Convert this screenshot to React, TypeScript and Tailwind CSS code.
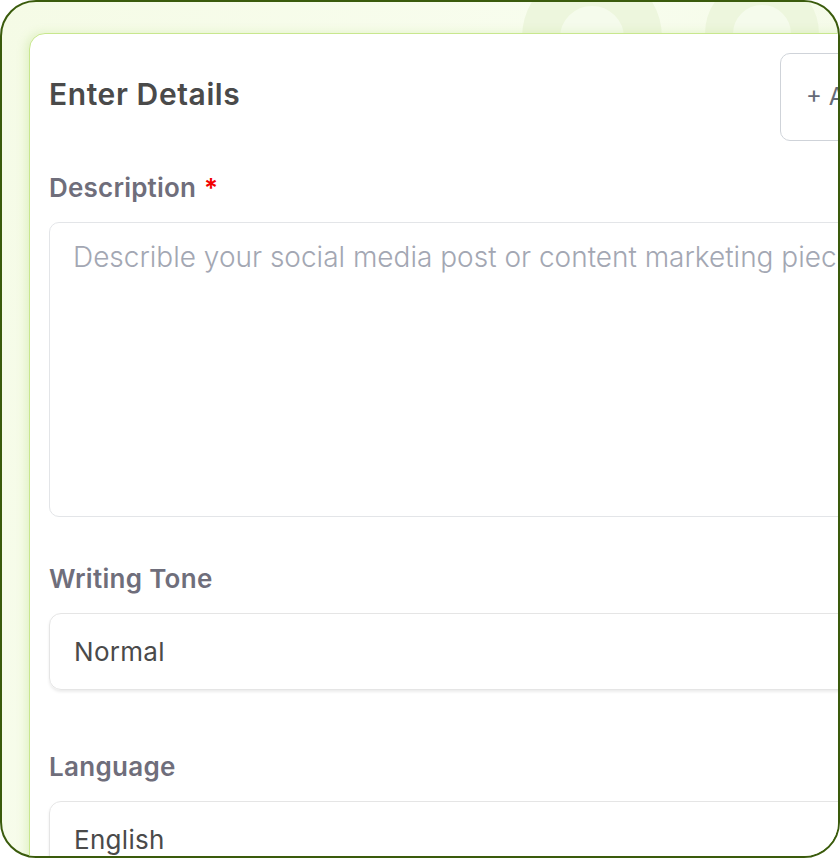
import React from "react";

export default function App() {
  return (
    <div
      className="relative w-[840px] h-[858px] overflow-hidden rounded-[36px] border-2 border-[#3a5b0c] bg-[linear-gradient(110deg,#f5fbe6_0%,#f8fdee_50%,#f2f9e4_100%)] pt-[31px] pl-[27px]"
      style={{ fontFamily: "Inter, 'Noto Sans', sans-serif" }}
    >
      {/* decorative rings */}
      <div className="absolute left-[520px] top-[-34px] w-[140px] h-[140px] rounded-full border-[38px] border-[#edf6dd] bg-[#f5fbec]" />
      <div className="absolute left-[703px] top-[-25px] w-[114px] h-[114px] rounded-full border-[28px] border-[#edf6dd] bg-[#f5fbec]" />

      <div className="relative w-[951px] h-[1000px] rounded-tl-[16px] border-[1.5px] border-[#c8e78e] bg-white shadow-[-3px_0_10px_rgba(160,210,90,0.25)] px-[19px] pt-[19px]">
        <div className="flex items-start justify-between h-[89px]">
          <h1 className="mt-[23px] leading-[36px] text-[30px] font-semibold text-[#4a4a4a] tracking-[0.6px]">Enter Details</h1>
          <div className="w-[180px] h-[88px] rounded-[10px] border-[1.5px] border-[#cfd3d9] flex items-center pl-[25px] text-[24px] text-[#656a77] whitespace-nowrap">
            + Add Example
          </div>
        </div>

        <div className="mt-[30px] flex items-center h-[30px] text-[26px] font-semibold text-[#6f6e7b] tracking-[0.2px]">
          Description<span className="ml-[8px] text-[#f20000]">*</span>
        </div>
        <textarea
          className="mt-[20px] block w-full h-[295px] rounded-[10px] border-[1.5px] border-[#e3e5e8] pl-[23px] pt-[13px] text-[28px] font-light text-[#4a4a4a] placeholder:text-[#a3a7b3] resize-none outline-none"
          placeholder="Describle your social media post or content marketing piece"
        />

        <div className="mt-[46px] flex items-center h-[30px] text-[26px] font-semibold text-[#6f6e7b] tracking-[0.3px]">
          Writing Tone
        </div>
        <div className="mt-[20px] h-[77px] rounded-[12px] border-[1.5px] border-[#e5e5e5] shadow-[0_2px_3px_rgba(0,0,0,0.08)] flex items-center pl-[24px] text-[26px] text-[#4a4a4a] tracking-[0.3px]">
          Normal
        </div>

        <div className="mt-[61px] flex items-center h-[30px] text-[26px] font-semibold text-[#6f6e7b] tracking-[0.3px]">
          Language
        </div>
        <div className="mt-[20px] h-[77px] rounded-[12px] border-[1.5px] border-[#e5e5e5] shadow-[0_2px_3px_rgba(0,0,0,0.08)] flex items-center pl-[24px] text-[26px] text-[#4a4a4a] tracking-[0.3px]">
          English
        </div>
      </div>
    </div>
  );
}
